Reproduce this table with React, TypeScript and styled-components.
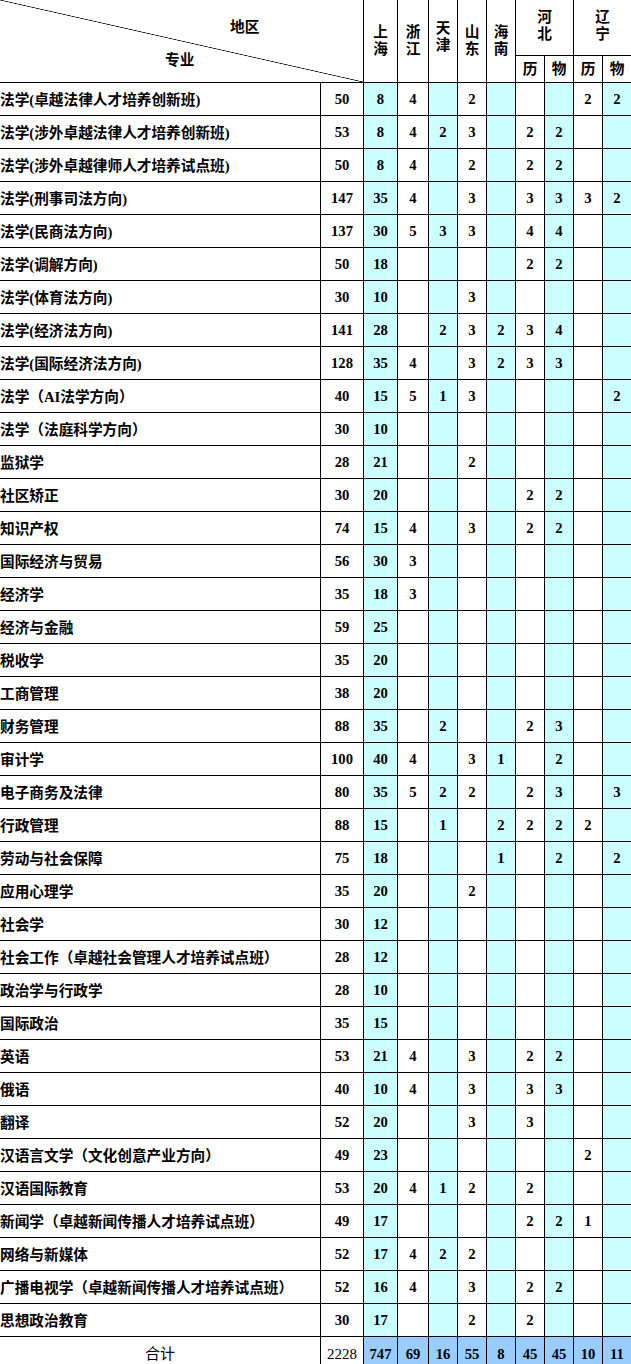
import { createGlobalStyle, styled } from "styled-components";

type Value = number | null;

interface Row {
  name: string;
  total: number;
  values: Value[];
}

const CYAN = "#ccffff";
const SUM_BLUE = "#99ccff";

// which region columns get the cyan fill
const shaded = [true, false, true, false, true, false, true, false, true];

const _ = null;

const rows: Row[] = [
  { name: "法学(卓越法律人才培养创新班)", total: 50, values: [8, 4, _, 2, _, _, _, 2, 2] },
  { name: "法学(涉外卓越法律人才培养创新班)", total: 53, values: [8, 4, 2, 3, _, 2, 2, _, _] },
  { name: "法学(涉外卓越律师人才培养试点班)", total: 50, values: [8, 4, _, 2, _, 2, 2, _, _] },
  { name: "法学(刑事司法方向)", total: 147, values: [35, 4, _, 3, _, 3, 3, 3, 2] },
  { name: "法学(民商法方向)", total: 137, values: [30, 5, 3, 3, _, 4, 4, _, _] },
  { name: "法学(调解方向)", total: 50, values: [18, _, _, _, _, 2, 2, _, _] },
  { name: "法学(体育法方向)", total: 30, values: [10, _, _, 3, _, _, _, _, _] },
  { name: "法学(经济法方向)", total: 141, values: [28, _, 2, 3, 2, 3, 4, _, _] },
  { name: "法学(国际经济法方向)", total: 128, values: [35, 4, _, 3, 2, 3, 3, _, _] },
  { name: "法学（AI法学方向）", total: 40, values: [15, 5, 1, 3, _, _, _, _, 2] },
  { name: "法学（法庭科学方向）", total: 30, values: [10, _, _, _, _, _, _, _, _] },
  { name: "监狱学", total: 28, values: [21, _, _, 2, _, _, _, _, _] },
  { name: "社区矫正", total: 30, values: [20, _, _, _, _, 2, 2, _, _] },
  { name: "知识产权", total: 74, values: [15, 4, _, 3, _, 2, 2, _, _] },
  { name: "国际经济与贸易", total: 56, values: [30, 3, _, _, _, _, _, _, _] },
  { name: "经济学", total: 35, values: [18, 3, _, _, _, _, _, _, _] },
  { name: "经济与金融", total: 59, values: [25, _, _, _, _, _, _, _, _] },
  { name: "税收学", total: 35, values: [20, _, _, _, _, _, _, _, _] },
  { name: "工商管理", total: 38, values: [20, _, _, _, _, _, _, _, _] },
  { name: "财务管理", total: 88, values: [35, _, 2, _, _, 2, 3, _, _] },
  { name: "审计学", total: 100, values: [40, 4, _, 3, 1, _, 2, _, _] },
  { name: "电子商务及法律", total: 80, values: [35, 5, 2, 2, _, 2, 3, _, 3] },
  { name: "行政管理", total: 88, values: [15, _, 1, _, 2, 2, 2, 2, _] },
  { name: "劳动与社会保障", total: 75, values: [18, _, _, _, 1, _, 2, _, 2] },
  { name: "应用心理学", total: 35, values: [20, _, _, 2, _, _, _, _, _] },
  { name: "社会学", total: 30, values: [12, _, _, _, _, _, _, _, _] },
  { name: "社会工作（卓越社会管理人才培养试点班）", total: 28, values: [12, _, _, _, _, _, _, _, _] },
  { name: "政治学与行政学", total: 28, values: [10, _, _, _, _, _, _, _, _] },
  { name: "国际政治", total: 35, values: [15, _, _, _, _, _, _, _, _] },
  { name: "英语", total: 53, values: [21, 4, _, 3, _, 2, 2, _, _] },
  { name: "俄语", total: 40, values: [10, 4, _, 3, _, 3, 3, _, _] },
  { name: "翻译", total: 52, values: [20, _, _, 3, _, 3, _, _, _] },
  { name: "汉语言文学（文化创意产业方向）", total: 49, values: [23, _, _, _, _, _, _, 2, _] },
  { name: "汉语国际教育", total: 53, values: [20, 4, 1, 2, _, 2, _, _, _] },
  { name: "新闻学（卓越新闻传播人才培养试点班）", total: 49, values: [17, _, _, _, _, 2, 2, 1, _] },
  { name: "网络与新媒体", total: 52, values: [17, 4, 2, 2, _, _, _, _, _] },
  { name: "广播电视学（卓越新闻传播人才培养试点班）", total: 52, values: [16, 4, _, 3, _, 2, 2, _, _] },
  { name: "思想政治教育", total: 30, values: [17, _, _, 2, _, 2, _, _, _] },
];

const sums = [747, 69, 16, 55, 8, 45, 45, 10, 11];

const GlobalStyle = createGlobalStyle`
  html, body {
    margin: 0;
    padding: 0;
    background: #ffffff;
    overflow: hidden;
  }
  body {
    font-family: "Liberation Serif", "Noto Sans CJK SC", serif;
    color: #000000;
  }
`;

const Page = styled.div`
  width: 631px;
  height: 1364px;
  overflow: hidden;
`;

const Sheet = styled.div`
  display: grid;
  grid-template-columns: 320px 42px 33px 30px repeat(7, 28px);
  grid-template-rows: 55px 26px;
  grid-auto-rows: 32px;
  gap: 1px;
  background: #000000;
  font-size: 14.67px;
  font-weight: 700;
`;

const Cell = styled.div<{ $bg?: string; $cols?: number; $rows?: number }>`
  display: flex;
  align-items: center;
  justify-content: center;
  background: ${(p) => p.$bg ?? "#ffffff"};
  grid-column: ${(p) => (p.$cols ? `span ${p.$cols}` : "auto")};
  grid-row: ${(p) => (p.$rows ? `span ${p.$rows}` : "auto")};
  line-height: 16px;
  white-space: nowrap;
`;

const Corner = styled(Cell)`
  flex-direction: column;
  align-items: flex-start;
  justify-content: flex-start;
  padding-top: 19px;
  gap: 16px;
  background: linear-gradient(
    to top right,
    #ffffff calc(50% - 0.7px),
    #000000 50%,
    #ffffff calc(50% + 0.7px)
  );
`;

const CornerLabel = styled.span<{ $left: number }>`
  margin-left: ${(p) => p.$left}px;
  line-height: 17px;
`;

const Stack = styled.span<{ $lift?: number }>`
  display: flex;
  flex-direction: column;
  align-items: center;
  line-height: 17px;
  margin-bottom: ${(p) => p.$lift ?? 0}px;
`;

const NameCell = styled(Cell)`
  justify-content: flex-start;
  padding-top: 1px;
`;

const SumLabel = styled(Cell)`
  font-weight: 400;
  font-size: 15px;
  padding-top: 2px;
`;

const SumTotal = styled(Cell)`
  font-weight: 400;
  font-size: 15px;
  padding-top: 2px;
`;

const SumValue = styled(Cell)`
  padding-top: 2px;
`;

const provinces = [
  { name: "上海", lift: 0 },
  { name: "浙江", lift: 0 },
  { name: "天津", lift: 8 },
  { name: "山东", lift: 0 },
  { name: "海南", lift: 0 },
];

function Vertical({ text, lift }: { text: string; lift?: number }) {
  return (
    <Stack $lift={lift}>
      {text.split("").map((ch, i) => (
        <span key={i}>{ch}</span>
      ))}
    </Stack>
  );
}

export default function App() {
  return (
    <Page>
      <GlobalStyle />
      <Sheet>
        <Corner $cols={2} $rows={2}>
          <CornerLabel $left={230}>地区</CornerLabel>
          <CornerLabel $left={165}>专业</CornerLabel>
        </Corner>
        {provinces.map((p) => (
          <Cell key={p.name} $rows={2}>
            <Vertical text={p.name} lift={p.lift} />
          </Cell>
        ))}
        <Cell $cols={2}>
          <Vertical text="河北" lift={4} />
        </Cell>
        <Cell $cols={2}>
          <Vertical text="辽宁" lift={4} />
        </Cell>
        <Cell>历</Cell>
        <Cell>物</Cell>
        <Cell>历</Cell>
        <Cell>物</Cell>

        {rows.map((row) => [
          <NameCell key={row.name}>{row.name}</NameCell>,
          <Cell key={row.name + "-total"}>{row.total}</Cell>,
          ...row.values.map((v, i) => (
            <Cell key={row.name + i} $bg={shaded[i] ? CYAN : undefined}>
              {v ?? ""}
            </Cell>
          )),
        ])}

        <SumLabel>合计</SumLabel>
        <SumTotal>2228</SumTotal>
        {sums.map((s, i) => (
          <SumValue key={i} $bg={SUM_BLUE}>
            {s}
          </SumValue>
        ))}
      </Sheet>
    </Page>
  );
}
